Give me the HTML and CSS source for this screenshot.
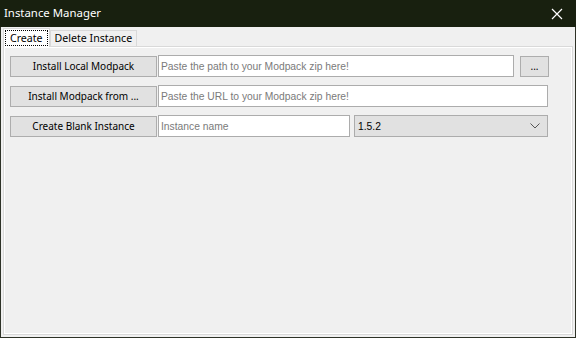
FILE: index.html
```
<!DOCTYPE html>
<html lang="en">
<head>
    <meta charset="UTF-8">
    <title>Instance Manager</title>
    <link rel="stylesheet" href="styles.css">
</head>
<body>
    <div class="window">
        <div class="titlebar">
            <span class="title">Instance Manager</span>
            <svg class="close" width="12" height="12" viewBox="0 0 12 12"><path d="M1 1L11 11M11 1L1 11" stroke="#ffffff" stroke-width="1.2"/></svg>
        </div>
        <div class="tabs">
            <div class="tab active"><span class="focus">Create</span></div>
            <div class="tab">Delete Instance</div>
        </div>
        <div class="panel">
            <div class="row">
                <button class="btn wide">Install Local Modpack</button>
                <input class="field path" type="text" placeholder="Paste the path to your Modpack zip here!">
                <button class="btn small">...</button>
            </div>
            <div class="row">
                <button class="btn wide">Install Modpack from ...</button>
                <input class="field url" type="text" placeholder="Paste the URL to your Modpack zip here!">
            </div>
            <div class="row">
                <button class="btn wide">Create Blank Instance</button>
                <input class="field name" type="text" placeholder="Instance name">
                <div class="select">
                    <span>1.5.2</span>
                    <svg width="10" height="6" viewBox="0 0 10 6"><path d="M0.5 0.5L5 5L9.5 0.5" fill="none" stroke="#555" stroke-width="1"/></svg>
                </div>
            </div>
        </div>
    </div>
</body>
</html>
```
FILE: styles.css
```
html, body{
    margin: 0;
    padding: 0;
}
body{
    width: 576px;
    height: 338px;
    font-family: 'Noto Sans', sans-serif;
    font-size: 12px;
}
.window{
    box-sizing: border-box;
    width: 576px;
    height: 338px;
    background: #f0f0f0;
    border: 1px solid #2e3227;
    border-top: none;
    display: flex;
    flex-direction: column;
}
.titlebar{
    height: 27px;
    background: #18200f;
    color: #ffffff;
    display: flex;
    align-items: center;
    justify-content: space-between;
    padding: 0 10px 0 4px;
    margin: 0 -1px;
}
.title{
    font-size: 11.4px;
    margin-top: -2px;
}
.close{
    margin-right: 3px;
}
.tabs{
    display: flex;
    align-items: flex-end;
    padding-left: 2px;
    margin-top: 1px;
    height: 18px;
}
.tab{
    box-sizing: border-box;
    height: 16px;
    line-height: 14px;
    padding: 0 4px;
    border: 1px solid #d9d9d9;
    border-bottom: none;
    background: #f0f0f0;
    color: #000;
    font-size: 10.6px;
}
.tab.active{
    background: #ffffff;
    padding: 1px 1px 0 1px;
    position: relative;
    z-index: 1;
    margin-bottom: -1px;
    height: 19px;
}
.focus{
    display: block;
    border: 1px dotted #000;
    padding: 0 4px;
    line-height: 14px;
}
.panel{
    flex: 1;
    margin: 0 2px 2px 2px;
    border: 1px solid #d9d9d9;
    box-shadow: inset 0 0 0 1px #ffffff;
    padding: 8px 6px;
    display: flex;
    flex-direction: column;
    gap: 8px;
}
.row{
    display: flex;
    align-items: center;
    height: 22px;
}
.btn{
    box-sizing: border-box;
    height: 21px;
    background: #e1e1e1;
    border: 1px solid #adadad;
    font-family: 'Noto Sans', sans-serif;
    font-size: 10px;
    color: #000;
    padding: 0;
}
.wide{
    width: 147px;
    margin-right: 1px;
}
.small{
    width: 29px;
    margin-left: 6px;
}
.field{
    box-sizing: border-box;
    height: 22px;
    border: 1px solid #acacac;
    background: #ffffff;
    padding: 0 2px;
    font-family: 'Liberation Sans', Arial, sans-serif;
    font-size: 10.3px;
    outline: none;
}
.field::placeholder{
    color: #7a7a7a;
}
.path{
    width: 356px;
}
.url{
    width: 390px;
}
.name{
    width: 192px;
}
.select{
    box-sizing: border-box;
    width: 194px;
    height: 22px;
    margin-left: 4px;
    background: #e1e1e1;
    border: 1px solid #acacac;
    display: flex;
    align-items: center;
    justify-content: space-between;
    padding: 0 7px 0 3px;
    font-family: 'Liberation Sans', Arial, sans-serif;
    font-size: 10.3px;
}
```
